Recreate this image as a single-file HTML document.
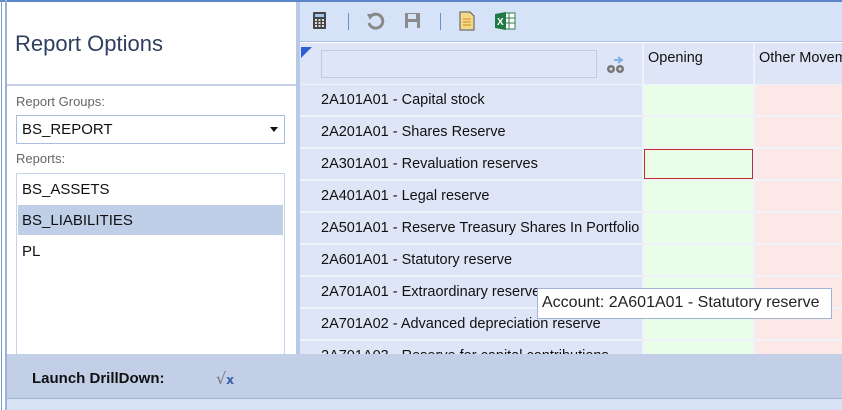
<!DOCTYPE html>
<html><head><meta charset="utf-8">
<style>
*{margin:0;padding:0;box-sizing:border-box}
body{width:842px;height:410px;overflow:hidden;background:#fff;font-family:"Liberation Sans",sans-serif;position:relative}
.a{position:absolute}
.row{position:absolute;left:300px;width:542px;height:30px}
.row .l{position:absolute;left:0;width:342px;height:30px;background:#dde5f7;font-size:14.5px;color:#111;padding-left:21px;line-height:30px;white-space:nowrap;overflow:hidden}
.row .o{position:absolute;left:344px;width:109px;height:30px;background:#e9fde9}
.row .m{position:absolute;left:455px;width:90px;height:30px;background:#fde8e8}
</style></head><body>
<div class="a" style="left:0;top:0;width:842px;height:2px;background:#5b86c6"></div>
<div class="a" style="left:1px;top:0;width:1px;height:410px;background:#7c9ccc"></div>
<div class="a" style="left:5px;top:0;width:2px;height:410px;background:#9bb3dc"></div>
<div class="a" style="left:15px;top:31px;font-size:22px;color:#2f3f5f">Report Options</div>
<div class="a" style="left:7px;top:84px;width:290px;height:2px;background:#c5d2ea"></div>
<div class="a" style="left:16px;top:94px;font-size:13px;color:#666">Report Groups:</div>
<div class="a" style="left:16px;top:115px;width:269px;height:29px;border:1px solid #a8bde0;font-size:15px;padding:5px 0 0 5px;color:#111">BS_REPORT</div>
<div class="a" style="left:270px;top:127px;width:0;height:0;border-left:4px solid transparent;border-right:4px solid transparent;border-top:5px solid #111"></div>
<div class="a" style="left:16px;top:151px;font-size:13px;color:#666">Reports:</div>
<div class="a" style="left:16px;top:173px;width:269px;height:190px;border:1px solid #c5d2ea"></div>
<div class="a" style="left:18px;top:205px;width:265px;height:30px;background:#c0cfe8"></div>
<div class="a" style="left:22px;top:181px;font-size:15px;color:#111">BS_ASSETS</div>
<div class="a" style="left:22px;top:212px;font-size:15px;color:#111">BS_LIABILITIES</div>
<div class="a" style="left:22px;top:243px;font-size:15px;color:#111">PL</div>
<div class="a" style="left:296px;top:2px;width:4px;height:360px;background:#b8c9e6"></div>
<div class="a" style="left:300px;top:2px;width:542px;height:40px;background:#d6e2f7;border-bottom:1px solid #a9bfe3"></div>
<svg class="a" style="left:312px;top:12px" width="16" height="18"><rect x="1" y="0" width="13" height="17" rx="1" fill="#444"/><rect x="3" y="2" width="9" height="3" fill="#9ec4ef"/><g fill="#ddd"><rect x="3" y="7" width="2" height="2"/><rect x="6.5" y="7" width="2" height="2"/><rect x="10" y="7" width="2" height="2"/><rect x="3" y="10" width="2" height="2"/><rect x="6.5" y="10" width="2" height="2"/><rect x="10" y="10" width="2" height="2"/><rect x="3" y="13" width="2" height="2"/><rect x="6.5" y="13" width="2" height="2"/><rect x="10" y="13" width="2" height="2"/></g></svg>
<div class="a" style="left:348px;top:13px;width:1px;height:17px;background:#6b8fc7"></div>
<svg class="a" style="left:366px;top:12px" width="20" height="18"><path d="M5 4 A7 7 0 1 1 3 11" stroke="#888" stroke-width="3" fill="none"/><path d="M1 2 L8 2 L4 8Z" fill="#888"/></svg>
<svg class="a" style="left:404px;top:12px" width="18" height="18"><rect x="1" y="1" width="15" height="15" fill="#8a8a8a"/><rect x="4" y="2" width="8" height="5" fill="#d6e2f7"/><rect x="4" y="10" width="9" height="6" fill="#d6e2f7"/></svg>
<div class="a" style="left:440px;top:13px;width:1px;height:17px;background:#6b8fc7"></div>
<svg class="a" style="left:459px;top:11px" width="16" height="20"><path d="M1 1 H11 L15 5 V19 H1Z" fill="#f3d98a" stroke="#555"/><g stroke="#d08a20"><line x1="4" y1="8" x2="12" y2="8"/><line x1="4" y1="11" x2="12" y2="11"/><line x1="4" y1="14" x2="12" y2="14"/></g></svg>
<svg class="a" style="left:495px;top:11px" width="22" height="20"><rect x="8" y="2" width="12" height="16" fill="#fff" stroke="#2e7d4a"/><g stroke="#2e7d4a"><line x1="14" y1="2" x2="14" y2="18"/><line x1="8" y1="7" x2="20" y2="7"/><line x1="8" y1="12" x2="20" y2="12"/></g><path d="M0 3 L11 1 V19 L0 17Z" fill="#1f7a43"/><text x="2" y="14" font-size="10" font-weight="bold" fill="#fff" font-family="Liberation Sans">X</text></svg>
<div class="a" style="left:300px;top:43px;width:542px;height:42px;background:#dde5f7"></div>
<div class="a" style="left:300px;top:84px;width:542px;height:1px;background:#eef2fb"></div>
<div class="a" style="left:301px;top:47px;width:0;height:0;border-top:11px solid #2f5fd0;border-right:11px solid transparent"></div>
<div class="a" style="left:321px;top:50px;width:276px;height:28px;border:1px solid #bccbe6;background:#dde5f7"></div>
<svg class="a" style="left:606px;top:55px" width="20" height="20"><path d="M8 5 H15 M12 2 L16 5 L12 8" stroke="#7fb3e6" stroke-width="2" fill="none"/><circle cx="5" cy="14" r="4" fill="#777"/><circle cx="14" cy="14" r="4" fill="#777"/><circle cx="5" cy="14" r="1.5" fill="#ddd"/><circle cx="14" cy="14" r="1.5" fill="#ddd"/></svg>
<div class="a" style="left:642px;top:43px;width:2px;height:42px;background:#eef2fb"></div>
<div class="a" style="left:753px;top:43px;width:2px;height:42px;background:#eef2fb"></div>
<div class="a" style="left:648px;top:50px;font-size:14.5px;color:#111">Opening</div>
<div class="a" style="left:759px;top:50px;font-size:14.5px;color:#111;white-space:nowrap">Other Movements</div>
<div class="a" style="left:300px;top:85px;width:542px;height:270px;background:#eef2fb"></div>
<div class="row" style="top:85px"><div class="l">2A101A01 - Capital stock</div><div class="o"></div><div class="m"></div></div>
<div class="row" style="top:117px"><div class="l">2A201A01 - Shares Reserve</div><div class="o"></div><div class="m"></div></div>
<div class="row" style="top:149px"><div class="l">2A301A01 - Revaluation reserves</div><div class="o" style="border:1px solid #c42a2a;top:0"></div><div class="m"></div></div>
<div class="row" style="top:181px"><div class="l">2A401A01 - Legal reserve</div><div class="o"></div><div class="m"></div></div>
<div class="row" style="top:213px"><div class="l">2A501A01 - Reserve Treasury Shares In Portfolio</div><div class="o"></div><div class="m"></div></div>
<div class="row" style="top:245px"><div class="l">2A601A01 - Statutory reserve</div><div class="o"></div><div class="m"></div></div>
<div class="row" style="top:277px"><div class="l">2A701A01 - Extraordinary reserve</div><div class="o"></div><div class="m"></div></div>
<div class="row" style="top:309px"><div class="l">2A701A02 - Advanced depreciation reserve</div><div class="o"></div><div class="m"></div></div>
<div class="row" style="top:341px"><div class="l">2A701A03 - Reserve for capital contributions</div><div class="o"></div><div class="m"></div></div>
<div class="a" style="left:537px;top:288px;width:295px;height:31px;background:#fff;border:1px solid #9fb3d6;font-size:16px;color:#222;padding:5px 0 0 4px;white-space:nowrap">Account: 2A601A01 - Statutory reserve</div>
<div class="a" style="left:7px;top:354px;width:835px;height:44px;background:#c3cfe7"></div>
<div class="a" style="left:32px;top:370px;font-size:15px;font-weight:bold;color:#111">Launch DrillDown:</div>
<div class="a" style="left:216px;top:369px;font-size:16px;color:#777;font-family:'DejaVu Sans',sans-serif">√<span style="color:#3a5ea8;font-size:12px;font-weight:bold">x</span></div>
<div class="a" style="left:7px;top:398px;width:835px;height:12px;background:#d8e2f5;border-top:1px solid #9fb3d6"></div>
</body></html>
